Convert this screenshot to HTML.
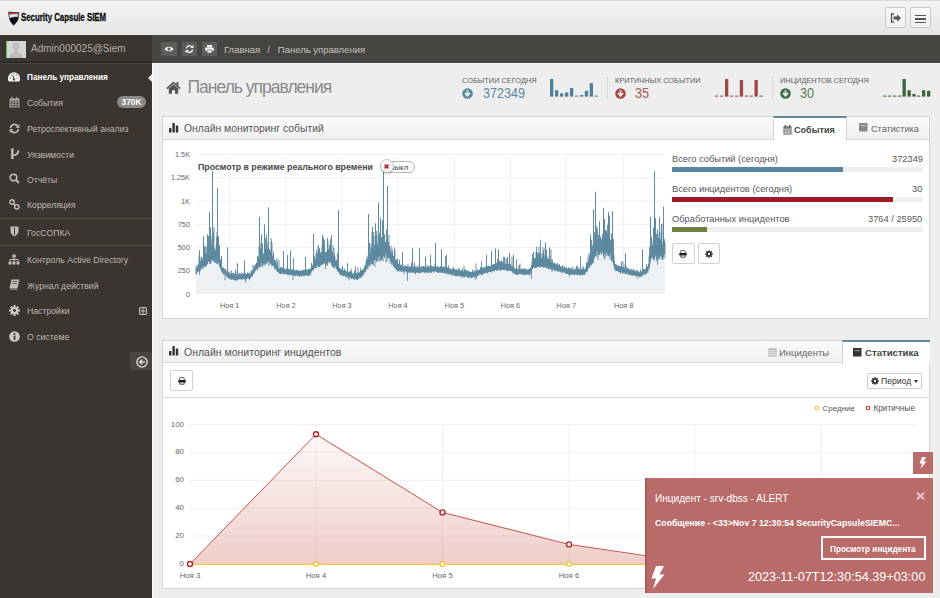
<!DOCTYPE html>
<html><head><meta charset="utf-8">
<style>
*{box-sizing:border-box;margin:0;padding:0}
html,body{width:940px;height:598px;overflow:hidden;background:#eeeeee;font-family:"Liberation Sans",sans-serif;color:#555}
.a{position:absolute}
.nw{white-space:nowrap}
#top{left:0;top:0;width:940px;height:35px;background:linear-gradient(#f4f4f4,#e6e6e6);border-top:1px solid #d9dcdc;border-bottom:1px solid #eeeeee}
.tbtn{top:6px;width:21px;height:21px;border:1px solid #c9c9c9;border-radius:2px;background:linear-gradient(#f9f9f9,#f0f0f0)}
#side{left:0;top:35px;width:152px;height:563px;background:#3a3531}
#crumb{left:152px;top:35px;width:788px;height:28px;background:#474542}
#content{left:152px;top:63px;width:788px;height:535px;background:#eeeeee;border-left:2px solid #f7f7f7;border-top:1px solid #f7f7f7}
.mi{left:27px;font-size:8.7px;color:#bdb7b0;line-height:10px}
.ic{left:8px}
.sep{left:0;width:152px;height:1px;background:#524c47}
.cbtn{top:42px;height:14px;background:#5e5b58;border-radius:1px}
.panel{background:#fff;border:1px solid #d5d5d5}
.ph{background:linear-gradient(#fbfbfb,#efefef);border-bottom:1px solid #d8d8d8}
.lbl{font-size:7.4px;color:#606060;letter-spacing:0}
.bar{position:absolute;width:3px}
.grid{stroke:#f1f1f1;stroke-width:1}
.axl{font-size:7.3px;fill:#666;font-family:"Liberation Sans",sans-serif}
</style></head><body>
<!-- top header -->
<div id="top" class="a">
  <svg class="a" style="left:8px;top:9.5px" width="12" height="15" viewBox="0 0 12 15">
    <path d="M0.4,0.8 L11.2,1.2 C11.2,6.5 10.2,10.5 5.6,14.6 C1.4,10.5 0.4,6.5 0.4,0.8 Z" fill="#0b0b0b"/>
    <path d="M0.9,1.3 L10.7,1.6 L10.6,2.6 C7,2.2 4,2.6 0.95,3.6 Z" fill="#d9282f"/>
    <path d="M0.95,3.6 C4,2.6 7,2.2 10.6,2.6 L10.3,6.2 C7.5,5.4 4,6.5 1.5,7.2 Z" fill="#a9bccd"/>
    <path d="M1.8,4.6 C4.5,3.4 7.5,3.4 9.8,4.2 C7,4.8 4.5,5.6 2.2,6.2 Z" fill="#f2f4f7"/>
  </svg>
  <div class="a nw" style="left:21.3px;top:8.6px;font-size:10.7px;font-weight:700;color:#0a0a0a;transform:scaleX(0.735);transform-origin:0 0;letter-spacing:0;-webkit-text-stroke:0.3px #0a0a0a;line-height:14px">Security Capsule SIEM</div>
  <div class="a tbtn" style="left:885px">
    <svg class="a" style="left:4px;top:5px" width="12" height="10" viewBox="0 0 12 10"><path d="M4,1 L1.5,1 L1.5,9 L4,9" fill="none" stroke="#555" stroke-width="1.3"/><path d="M3.5,3.6 L7,3.6 L7,1.2 L11,5 L7,8.8 L7,6.4 L3.5,6.4 Z" fill="#555"/></svg>
  </div>
  <div class="a tbtn" style="left:910px">
    <div class="a" style="left:4px;top:6.5px;width:11px;height:1.7px;background:#555"></div>
    <div class="a" style="left:4px;top:10px;width:11px;height:1.7px;background:#555"></div>
    <div class="a" style="left:4px;top:13.5px;width:11px;height:1.7px;background:#555"></div>
  </div>
</div>

<!-- sidebar -->
<div id="side" class="a">
  <div class="a" style="left:6.3px;top:5.7px;width:19.5px;height:17px;background:#d6d6d6;border-left:1.7px solid #4cc23a;overflow:hidden">
    <svg class="a" style="left:0;top:0" width="18" height="17" viewBox="0 0 18 17"><path d="M9,1.5 C11.3,1.5 12.6,3.3 12.4,5.8 C12.2,8 11.2,9.6 10.6,10.3 C10.5,11 11,11.6 12.5,12.2 C14.5,13 15.5,14 15.8,17 H2.2 C2.5,14 3.5,13 5.5,12.2 C7,11.6 7.5,11 7.4,10.3 C6.8,9.6 5.8,8 5.6,5.8 C5.4,3.3 6.7,1.5 9,1.5 Z" fill="#bdbdbd"/></svg>
  </div>
  <div class="a nw" style="left:31px;top:8px;font-size:10px;color:#b3ada6;line-height:12px">Admin000025@Siem</div>
  <div class="a" style="left:0;top:26px;width:152px;height:2px;background:#2e2a27"></div>
</div>
<div class="a sep" style="top:61px;background:#2d2926;height:1.5px"></div><div class="a sep" style="top:62.5px;background:#46413d;height:1px"></div>

<!-- menu items -->
<div class="a mi nw" style="top:73px;color:#fff;font-weight:700;font-size:8.2px">Панель управления</div>
<div class="a mi nw" style="top:98px">События</div>
<div class="a nw" style="left:117px;top:96px;width:29px;height:12px;border-radius:6px;background:#8c8985;color:#fff;font-size:8.3px;font-weight:700;text-align:center;line-height:12px">370K</div>
<div class="a mi nw" style="top:124px">Ретроспективный анализ</div>
<div class="a mi nw" style="top:150px">Уязвимости</div>
<div class="a mi nw" style="top:175px">Отчёты</div>
<div class="a mi nw" style="top:200px">Корреляция</div>
<div class="a sep" style="top:218px"></div>
<div class="a mi nw" style="top:228px">ГосСОПКА</div>
<div class="a sep" style="top:245px"></div>
<div class="a mi nw" style="top:255px">Контроль Active Directory</div>
<div class="a mi nw" style="top:281px">Журнал действий</div>
<div class="a mi nw" style="top:306px">Настройки</div>
<div class="a mi nw" style="top:332px">О системе</div>
<!-- active arrow -->
<div class="a" style="left:148px;top:73.5px;width:0;height:0;border-top:4px solid transparent;border-bottom:4px solid transparent;border-right:4px solid #e4ecf3"></div>
<!-- collapse btn -->
<div class="a" style="left:130px;top:352px;width:22px;height:18px;background:#4a4541;border-radius:3px 0 0 3px">
  <svg class="a" style="left:6px;top:3.5px" width="12" height="12" viewBox="0 0 12 12"><circle cx="6" cy="6" r="5.1" fill="none" stroke="#dcd8d4" stroke-width="1.4"/><path d="M9,6 L4,6 M6.2,3.6 L3.7,6 L6.2,8.4" fill="none" stroke="#dcd8d4" stroke-width="1.5"/></svg>
</div>

<!-- sidebar icons -->
<svg class="a" style="left:8px;top:72px" width="12" height="10" viewBox="0 0 12 10"><path d="M0.8,9.6 C0,8.5 0,7.5 0,6.2 A6,6 0 0 1 12,6.2 C12,7.5 12,8.5 11.2,9.6 Z" fill="#f4f4f4"/><circle cx="6" cy="7.6" r="1.1" fill="#3a3531"/><path d="M6,7.6 L5,3.4" stroke="#3a3531" stroke-width="0.9"/><circle cx="2.5" cy="6" r="0.6" fill="#3a3531"/><circle cx="9.5" cy="6" r="0.6" fill="#3a3531"/><circle cx="3.6" cy="3" r="0.6" fill="#3a3531"/><circle cx="8.4" cy="3" r="0.6" fill="#3a3531"/><circle cx="6" cy="2" r="0.6" fill="#3a3531"/></svg>
<svg class="a" style="left:9px;top:97px" width="11" height="11" viewBox="0 0 11 11"><rect x="0.5" y="1.5" width="10" height="9" fill="#b0aaa4"/><path d="M0.5,4 H10.5 M0.5,6.3 H10.5 M0.5,8.5 H10.5 M3,4 V10.5 M5.5,4 V10.5 M8,4 V10.5" stroke="#3a3531" stroke-width="0.6"/><rect x="2.5" y="0" width="1.3" height="2.5" fill="#b0aaa4"/><rect x="7.2" y="0" width="1.3" height="2.5" fill="#b0aaa4"/></svg>
<svg class="a" style="left:9px;top:123px" width="11" height="11" viewBox="0 0 11 11"><path d="M1.5,5 A4,4 0 0 1 9,3.5 M9.5,6 A4,4 0 0 1 2,7.5" fill="none" stroke="#c2bdb7" stroke-width="1.6"/><path d="M10.5,1 L10.5,5 L6.5,5 Z M0.5,10 L0.5,6 L4.5,6 Z" fill="#b0aaa4"/></svg>
<svg class="a" style="left:10px;top:148px" width="10" height="12" viewBox="0 0 10 12"><path d="M2.3,1 V10.6" stroke="#c2bdb7" stroke-width="2.4"/><path d="M0.8,1 H3.8 M0.8,10.6 H3.8" stroke="#c2bdb7" stroke-width="1"/><path d="M3.4,7.2 C6.5,7.2 8.2,5.5 8.4,2.4" fill="none" stroke="#c2bdb7" stroke-width="1.9"/></svg>
<svg class="a" style="left:9px;top:173px" width="11" height="11" viewBox="0 0 11 11"><circle cx="4.5" cy="4.5" r="3.3" fill="none" stroke="#c2bdb7" stroke-width="1.6"/><path d="M7,7 L10,10" stroke="#c2bdb7" stroke-width="2"/></svg>
<svg class="a" style="left:9px;top:199px" width="11" height="11" viewBox="0 0 11 11"><circle cx="3" cy="3" r="2.2" fill="none" stroke="#c2bdb7" stroke-width="1.4"/><circle cx="7.8" cy="7.8" r="2.2" fill="none" stroke="#c2bdb7" stroke-width="1.4"/><path d="M4.5,4.5 L6.3,6.3" stroke="#c2bdb7" stroke-width="1.3"/></svg>
<svg class="a" style="left:10px;top:226px" width="9" height="11" viewBox="0 0 9 11"><path d="M0.5,0.5 H8.5 V5 C8.5,8 6,9.5 4.5,10.5 C3,9.5 0.5,8 0.5,5 Z" fill="#c2bdb7"/><path d="M4.5,1.5 V9" stroke="#3a3531" stroke-width="1"/></svg>
<svg class="a" style="left:8px;top:254px" width="12" height="11" viewBox="0 0 12 11"><rect x="4.3" y="0.5" width="3.4" height="3" fill="#c2bdb7"/><rect x="0.5" y="7.5" width="3" height="3" fill="#c2bdb7"/><rect x="4.5" y="7.5" width="3" height="3" fill="#c2bdb7"/><rect x="8.5" y="7.5" width="3" height="3" fill="#c2bdb7"/><path d="M6,3.5 V7.5 M2,7.5 V5.5 H10 V7.5" fill="none" stroke="#c2bdb7" stroke-width="1"/></svg>
<svg class="a" style="left:9px;top:279px" width="11" height="11" viewBox="0 0 11 11"><path d="M2.5,0.5 H10.5 L8.5,9 H0.5 Z" fill="#c2bdb7"/><path d="M1,10 H8.5" stroke="#c2bdb7" stroke-width="1"/><path d="M3.5,2.5 H8.5 M3,4.5 H8" stroke="#3a3531" stroke-width="0.7"/></svg>
<svg class="a" style="left:9px;top:305px" width="11" height="11" viewBox="0 0 11 11"><circle cx="5.5" cy="5.5" r="3.6" fill="#d0cbc6"/><path d="M5.5,0 V11 M0,5.5 H11 M1.6,1.6 L9.4,9.4 M9.4,1.6 L1.6,9.4" stroke="#cfcac5" stroke-width="2"/><circle cx="5.5" cy="5.5" r="1.4" fill="#3a3531"/></svg>
<svg class="a" style="left:9px;top:331px" width="11" height="11" viewBox="0 0 11 11"><circle cx="5.5" cy="5.5" r="5.3" fill="#d0cbc6"/><rect x="4.7" y="4.5" width="1.7" height="4.5" fill="#3a3531"/><circle cx="5.5" cy="2.8" r="1" fill="#3a3531"/></svg>
<svg class="a" style="left:139px;top:306.5px" width="8" height="8" viewBox="0 0 8 8"><rect x="0.6" y="0.6" width="6.8" height="6.8" rx="1" fill="none" stroke="#c6c1bb" stroke-width="1.1"/><path d="M4,1.5 V6.5 M1.5,4 H6.5" stroke="#c6c1bb" stroke-width="1"/></svg>

<!-- breadcrumb -->
<div id="crumb" class="a">
  <div class="a cbtn" style="left:9px;top:7px;width:16px"><svg class="a" style="left:3px;top:3px" width="10" height="8" viewBox="0 0 10 8"><path d="M0.5,4 C2,1 8,1 9.5,4 C8,7 2,7 0.5,4 Z" fill="#eee"/><circle cx="5" cy="4" r="1.5" fill="#5e5b58"/></svg></div>
  <div class="a cbtn" style="left:30px;top:7px;width:15px"><svg class="a" style="left:3px;top:2px" width="9" height="10" viewBox="0 0 9 10"><path d="M1.5,4.5 A3,3 0 0 1 7,3 M7.5,5.5 A3,3 0 0 1 2,7" fill="none" stroke="#eee" stroke-width="1.4"/><path d="M8.5,0.8 V4 H5.3 Z M0.5,9.2 V6 H3.7 Z" fill="#eee"/></svg></div>
  <div class="a cbtn" style="left:50px;top:7px;width:15px"><svg class="a" style="left:3px;top:3px" width="9" height="8" viewBox="0 0 9 8"><rect x="2" y="0" width="5" height="2.5" fill="#eee"/><rect x="0" y="2.5" width="9" height="3.5" rx="0.8" fill="#eee"/><rect x="2" y="5" width="5" height="3" fill="#eee" stroke="#5e5b58" stroke-width="0.6"/></svg></div>
  <div class="a nw" style="left:72px;top:8.5px;font-size:9.5px;color:#c5c2be;line-height:12px">Главная<span style="padding:0 8px 0 7px">/</span>Панель управления</div>
</div>

<!-- content bg -->
<div id="content" class="a"></div>

<!-- page title -->
<svg class="a" style="left:166px;top:81px" width="15" height="13" viewBox="0 0 15 13"><path d="M7.5,0.5 L0.3,7 L1.5,8.2 L7.5,2.8 L13.5,8.2 L14.7,7 Z" fill="#555"/><path d="M2.8,7.5 L7.5,3.5 L12.2,7.5 V12.8 H9 V9.3 H6 V12.8 H2.8 Z" fill="#555"/><rect x="10.5" y="1" width="2" height="3.5" fill="#555"/></svg>
<div class="a nw" style="left:187.5px;top:77.3px;font-size:17.5px;color:#8a8a8a;letter-spacing:-1px;line-height:20px">Панель управления</div>

<!-- stats -->
<div class="a nw lbl" style="left:462px;top:76px">СОБЫТИИ СЕГОДНЯ</div>
<svg class="a" style="left:462px;top:88px" width="11" height="11" viewBox="0 0 11 11"><circle cx="5.5" cy="5.5" r="5.3" fill="#5887a2"/><path d="M5.5,2.3 V7 M3,5 L5.5,7.8 L8,5" fill="none" stroke="#eee" stroke-width="1.7"/></svg>
<div class="a nw" style="left:483px;top:85.5px;font-size:14px;color:#5c8aa5;line-height:15px;transform:scaleX(0.9);transform-origin:0 0">372349</div>
<div class="a" style="left:607px;top:77px;height:22px;border-left:1px dotted #c8c8c8"></div>
<div class="a nw lbl" style="left:615px;top:76px">КРИТИЧНЫХ СОБЫТИИ</div>
<svg class="a" style="left:615px;top:88px" width="11" height="11" viewBox="0 0 11 11"><circle cx="5.5" cy="5.5" r="5.3" fill="#a84a48"/><path d="M5.5,2.3 V7 M3,5 L5.5,7.8 L8,5" fill="none" stroke="#eee" stroke-width="1.7"/></svg>
<div class="a nw" style="left:635px;top:85.5px;font-size:14px;color:#ac5553;line-height:15px;transform:scaleX(0.9);transform-origin:0 0">35</div>
<div class="a" style="left:772px;top:77px;height:22px;border-left:1px dotted #c8c8c8"></div>
<div class="a nw lbl" style="left:780px;top:76px">ИНЦИДЕНТОВ СЕГОДНЯ</div>
<svg class="a" style="left:780px;top:88px" width="11" height="11" viewBox="0 0 11 11"><circle cx="5.5" cy="5.5" r="5.3" fill="#3f6b42"/><path d="M5.5,2.3 V7 M3,5 L5.5,7.8 L8,5" fill="none" stroke="#eee" stroke-width="1.7"/></svg>
<div class="a nw" style="left:800px;top:85.5px;font-size:14px;color:#557a57;line-height:15px;transform:scaleX(0.9);transform-origin:0 0">30</div>

<!-- sparklines -->
<svg class="a" style="left:545px;top:75px" width="400" height="25">
 <g fill="#4f7f99">
  <rect x="5" y="4" width="3.3" height="17.6"/><rect x="10" y="15.2" width="3.3" height="6.4"/><rect x="15" y="18.4" width="3.3" height="3.2"/><rect x="20" y="17.4" width="3.3" height="4.2"/><rect x="25" y="13" width="3.3" height="8.6"/><rect x="30" y="20.6" width="3.3" height="1"/><rect x="35" y="20" width="3.3" height="1.6"/><rect x="39.8" y="15.8" width="3.3" height="5.8"/><rect x="44.7" y="8.2" width="3.3" height="13.4"/><rect x="49.6" y="20.6" width="3.3" height="1"/>
 </g>
 <g fill="#9b4848">
  <rect x="170" y="20.6" width="3.3" height="1"/><rect x="175" y="20.6" width="3.3" height="1"/><rect x="180" y="4.1" width="3.3" height="17.5"/><rect x="185" y="20.6" width="3.3" height="1"/><rect x="190" y="20.6" width="3.3" height="1"/><rect x="194.8" y="5" width="3.3" height="16.6"/><rect x="199.8" y="20.6" width="3.3" height="1"/><rect x="204.6" y="20.6" width="3.3" height="1"/><rect x="209.5" y="5" width="3.3" height="16.6"/><rect x="214.5" y="20.6" width="3.3" height="1"/>
 </g>
 <g fill="#3b643a">
  <rect x="338.2" y="20.6" width="3.3" height="1"/><rect x="343" y="20.6" width="3.3" height="1"/><rect x="348" y="20.6" width="3.3" height="1"/><rect x="353" y="20.6" width="3.3" height="1"/><rect x="357.5" y="4" width="3.3" height="17.6"/><rect x="362.5" y="15.2" width="3.3" height="6.4"/><rect x="367.4" y="19" width="3.3" height="2.6"/><rect x="372" y="20.6" width="3.3" height="1"/><rect x="377" y="15.2" width="3.3" height="6.4"/><rect x="382" y="15.8" width="3.3" height="5.8"/>
 </g>
</svg>

<!-- events panel -->
<div class="a panel" style="left:162px;top:116px;width:768px;height:203px"></div>
<div class="a ph" style="left:163px;top:117px;width:766px;height:23px"></div>
<svg class="a" style="left:169px;top:122.5px" width="10" height="10" viewBox="0 0 10 10"><rect x="0" y="5" width="2.4" height="4.5" rx="0.5" fill="#333"/><rect x="3.4" y="0" width="2.4" height="9.5" rx="0.5" fill="#333"/><rect x="6.8" y="2.5" width="2.4" height="7" rx="0.5" fill="#333"/></svg>
<div class="a nw" style="left:184px;top:122.7px;font-size:10.4px;color:#585858;line-height:12px">Онлайн мониторинг событий</div>
<!-- tabs -->
<div class="a" style="left:773px;top:116px;width:74px;height:25px;background:#fff;border-top:2px solid #60879e;border-left:1px solid #d5d5d5;border-right:1px solid #d5d5d5"></div>
<svg class="a" style="left:783px;top:124.5px" width="9" height="10" viewBox="0 0 9 10"><rect x="0.3" y="1.3" width="8.4" height="8.4" rx="0.8" fill="#7a7a7a"/><path d="M0.3,4 H8.7 M0.3,6 H8.7 M0.3,8 H8.7 M3.1,4 V9.7 M5.9,4 V9.7" stroke="#f4f4f4" stroke-width="0.55"/><rect x="1.6" y="0" width="1.3" height="2.2" fill="#555"/><rect x="6.1" y="0" width="1.3" height="2.2" fill="#555"/></svg>
<div class="a nw" style="left:794px;top:124.8px;font-size:9.1px;font-weight:700;color:#444;line-height:11px">События</div>
<svg class="a" style="left:859px;top:123px" width="9" height="9" viewBox="0 0 9 9"><rect x="0" y="0" width="8.5" height="8.5" fill="#888"/><rect x="1.5" y="2" width="5.5" height="1.2" fill="#bbb"/></svg>
<div class="a nw" style="left:871px;top:123.5px;font-size:9.1px;color:#666;line-height:11px">Статистика</div>

<!-- events chart -->
<svg class="a" style="left:0;top:0" width="940" height="598" viewBox="0 0 940 598">
  <g class="grid">
    <path d="M196,154.5 H665 M196,177.8 H665 M196,201.1 H665 M196,224.4 H665 M196,247.6 H665 M196,270.9 H665"/>
    <path d="M229.7,154 V294 M286,154 V294 M342,154 V294 M398,154 V294 M454.4,154 V294 M510.4,154 V294 M566.3,154 V294 M623.6,154 V294"/>
  </g>
  <path d="M196.0,273.6 L197.0,271.6 L198.0,271.1 L199.0,269.7 L200.0,269.9 L201.0,268.5 L202.0,266.4 L203.0,268.2 L204.0,264.2 L205.0,266.1 L206.0,265.4 L207.0,263.7 L208.0,259.9 L209.0,260.1 L210.0,260.5 L211.0,261.7 L212.0,258.3 L213.0,258.4 L214.0,261.3 L215.0,260.7 L216.0,258.5 L217.0,257.7 L218.0,261.9 L219.0,263.3 L220.0,265.8 L221.0,269.1 L222.0,271.2 L223.0,273.2 L224.0,273.7 L225.0,279.3 L226.0,275.3 L227.0,275.8 L228.0,277.4 L229.0,277.8 L230.0,278.4 L231.0,277.5 L232.0,278.8 L233.0,277.7 L234.0,278.7 L235.0,279.5 L236.0,279.7 L237.0,279.5 L238.0,278.1 L239.0,278.7 L240.0,278.0 L241.0,278.6 L242.0,278.3 L243.0,278.3 L244.0,277.3 L245.0,279.5 L246.0,278.8 L247.0,277.6 L248.0,277.5 L249.0,278.1 L250.0,277.8 L251.0,277.0 L252.0,275.5 L253.0,272.8 L254.0,272.7 L255.0,270.3 L256.0,269.9 L257.0,268.0 L258.0,268.6 L259.0,266.7 L260.0,266.4 L261.0,265.2 L262.0,262.1 L263.0,263.6 L264.0,264.7 L265.0,264.2 L266.0,260.9 L267.0,263.4 L268.0,261.7 L269.0,265.2 L270.0,261.4 L271.0,263.6 L272.0,265.4 L273.0,265.4 L274.0,265.2 L275.0,268.0 L276.0,269.0 L277.0,270.4 L278.0,270.8 L279.0,272.6 L280.0,272.5 L281.0,272.6 L282.0,272.5 L283.0,272.0 L284.0,273.8 L285.0,273.1 L286.0,273.0 L287.0,273.6 L288.0,273.8 L289.0,274.2 L290.0,273.5 L291.0,273.1 L292.0,274.6 L293.0,279.1 L294.0,274.0 L295.0,274.8 L296.0,273.9 L297.0,274.7 L298.0,274.1 L299.0,275.9 L300.0,274.9 L301.0,275.4 L302.0,274.1 L303.0,274.2 L304.0,275.7 L305.0,274.0 L306.0,274.8 L307.0,274.8 L308.0,275.2 L309.0,275.0 L310.0,275.0 L311.0,272.6 L312.0,270.3 L313.0,269.3 L314.0,268.9 L315.0,267.4 L316.0,265.2 L317.0,265.7 L318.0,265.5 L319.0,263.8 L320.0,266.0 L321.0,264.3 L322.0,263.1 L323.0,262.0 L324.0,260.8 L325.0,262.6 L326.0,262.6 L327.0,265.0 L328.0,261.5 L329.0,262.4 L330.0,261.1 L331.0,262.3 L332.0,262.4 L333.0,265.6 L334.0,267.4 L335.0,266.2 L336.0,268.0 L337.0,268.1 L338.0,270.5 L339.0,271.8 L340.0,274.2 L341.0,273.1 L342.0,274.8 L343.0,274.9 L344.0,275.0 L345.0,275.7 L346.0,275.1 L347.0,277.4 L348.0,277.1 L349.0,279.6 L350.0,277.0 L351.0,277.8 L352.0,277.8 L353.0,278.0 L354.0,278.7 L355.0,278.5 L356.0,278.7 L357.0,279.1 L358.0,277.9 L359.0,278.0 L360.0,276.0 L361.0,276.4 L362.0,275.6 L363.0,274.0 L364.0,273.7 L365.0,270.7 L366.0,268.9 L367.0,268.1 L368.0,268.1 L369.0,264.8 L370.0,265.9 L371.0,263.3 L372.0,259.6 L373.0,263.2 L374.0,259.2 L375.0,265.9 L376.0,255.8 L377.0,258.9 L378.0,259.6 L379.0,260.9 L380.0,254.0 L381.0,259.0 L382.0,256.9 L383.0,260.6 L384.0,255.2 L385.0,257.0 L386.0,261.2 L387.0,260.8 L388.0,257.3 L389.0,256.7 L390.0,262.5 L391.0,260.0 L392.0,264.6 L393.0,262.4 L394.0,265.5 L395.0,266.6 L396.0,268.8 L397.0,269.2 L398.0,270.0 L399.0,270.2 L400.0,270.9 L401.0,269.7 L402.0,270.3 L403.0,271.2 L404.0,273.5 L405.0,270.6 L406.0,270.8 L407.0,271.8 L408.0,272.0 L409.0,272.0 L410.0,272.2 L411.0,271.9 L412.0,271.8 L413.0,270.7 L414.0,271.0 L415.0,272.3 L416.0,271.9 L417.0,271.3 L418.0,271.9 L419.0,271.8 L420.0,271.8 L421.0,270.8 L422.0,270.8 L423.0,271.3 L424.0,271.5 L425.0,272.5 L426.0,270.4 L427.0,271.7 L428.0,272.1 L429.0,270.3 L430.0,272.1 L431.0,272.1 L432.0,270.3 L433.0,270.4 L434.0,271.9 L435.0,270.4 L436.0,270.3 L437.0,271.9 L438.0,271.5 L439.0,270.4 L440.0,271.4 L441.0,270.6 L442.0,272.1 L443.0,270.8 L444.0,271.7 L445.0,271.7 L446.0,273.2 L447.0,273.3 L448.0,272.7 L449.0,272.9 L450.0,273.5 L451.0,273.1 L452.0,275.2 L453.0,274.2 L454.0,274.8 L455.0,274.2 L456.0,275.5 L457.0,273.9 L458.0,274.3 L459.0,274.6 L460.0,275.2 L461.0,276.4 L462.0,276.0 L463.0,276.9 L464.0,274.7 L465.0,276.1 L466.0,275.4 L467.0,276.0 L468.0,277.0 L469.0,277.0 L470.0,276.3 L471.0,277.4 L472.0,277.1 L473.0,276.8 L474.0,275.1 L475.0,278.4 L476.0,274.9 L477.0,275.2 L478.0,275.0 L479.0,274.4 L480.0,273.3 L481.0,274.3 L482.0,273.7 L483.0,272.5 L484.0,272.2 L485.0,271.1 L486.0,271.9 L487.0,271.8 L488.0,271.5 L489.0,270.4 L490.0,271.2 L491.0,271.3 L492.0,271.6 L493.0,270.2 L494.0,270.8 L495.0,269.1 L496.0,269.3 L497.0,269.8 L498.0,268.3 L499.0,269.4 L500.0,270.1 L501.0,269.0 L502.0,268.9 L503.0,268.2 L504.0,269.2 L505.0,269.0 L506.0,269.3 L507.0,268.7 L508.0,270.2 L509.0,269.7 L510.0,270.1 L511.0,270.1 L512.0,270.5 L513.0,272.2 L514.0,271.8 L515.0,272.6 L516.0,273.7 L517.0,274.1 L518.0,274.1 L519.0,272.9 L520.0,273.2 L521.0,272.6 L522.0,273.4 L523.0,274.1 L524.0,273.1 L525.0,272.7 L526.0,272.9 L527.0,272.9 L528.0,273.8 L529.0,274.6 L530.0,273.8 L531.0,271.1 L532.0,268.3 L533.0,267.3 L534.0,266.5 L535.0,265.0 L536.0,267.3 L537.0,265.4 L538.0,266.2 L539.0,265.8 L540.0,266.3 L541.0,265.9 L542.0,266.2 L543.0,266.3 L544.0,264.4 L545.0,266.1 L546.0,266.3 L547.0,265.7 L548.0,267.2 L549.0,268.5 L550.0,268.4 L551.0,267.7 L552.0,271.0 L553.0,268.9 L554.0,269.8 L555.0,269.8 L556.0,270.1 L557.0,269.7 L558.0,270.2 L559.0,271.1 L560.0,271.0 L561.0,271.4 L562.0,271.8 L563.0,272.0 L564.0,270.8 L565.0,271.8 L566.0,271.3 L567.0,272.3 L568.0,272.9 L569.0,273.7 L570.0,272.7 L571.0,274.2 L572.0,273.0 L573.0,273.6 L574.0,274.3 L575.0,273.8 L576.0,274.2 L577.0,272.9 L578.0,273.7 L579.0,273.2 L580.0,274.1 L581.0,274.3 L582.0,272.9 L583.0,274.4 L584.0,273.5 L585.0,273.5 L586.0,271.2 L587.0,269.4 L588.0,267.8 L589.0,267.5 L590.0,266.0 L591.0,263.0 L592.0,261.6 L593.0,262.9 L594.0,256.9 L595.0,254.8 L596.0,255.0 L597.0,256.2 L598.0,259.0 L599.0,252.9 L600.0,253.4 L601.0,250.9 L602.0,252.1 L603.0,252.4 L604.0,257.5 L605.0,258.7 L606.0,255.5 L607.0,254.4 L608.0,255.1 L609.0,255.5 L610.0,258.5 L611.0,258.4 L612.0,260.0 L613.0,261.4 L614.0,265.8 L615.0,269.8 L616.0,269.8 L617.0,269.9 L618.0,269.7 L619.0,270.5 L620.0,271.0 L621.0,272.0 L622.0,271.0 L623.0,272.7 L624.0,271.5 L625.0,273.2 L626.0,271.8 L627.0,273.2 L628.0,273.2 L629.0,274.3 L630.0,273.8 L631.0,274.2 L632.0,274.7 L633.0,274.3 L634.0,274.8 L635.0,274.8 L636.0,275.0 L637.0,277.5 L638.0,275.4 L639.0,276.1 L640.0,275.9 L641.0,276.4 L642.0,274.1 L643.0,274.9 L644.0,273.0 L645.0,273.7 L646.0,273.4 L647.0,271.4 L648.0,271.8 L649.0,266.7 L650.0,262.6 L651.0,258.9 L652.0,256.6 L653.0,255.8 L654.0,258.0 L655.0,256.4 L656.0,254.7 L657.0,253.5 L658.0,254.9 L659.0,257.8 L660.0,258.3 L661.0,253.0 L662.0,258.7 L663.0,259.1 L664.0,252.3 L665.0,257.2 L665.0,294.0 L196.0,294.0 Z" fill="#edf1f4" stroke="none"/>
  <path d="M196.0 274.5V266.1M196.5 274.0V268.4M197.0 272.6V264.4M197.5 271.6V267.8M198.0 272.0V265.6M198.5 271.1V263.7M199.0 270.7V255.2M199.5 274.7V255.2M200.0 270.9V263.9M200.5 270.4V260.9M201.0 269.4V257.8M201.5 267.4V256.7M202.0 267.3V257.4M202.5 268.7V260.4M203.0 269.2V258.5M203.5 265.9V254.9M204.0 265.2V256.5M204.5 267.2V246.2M205.0 267.0V246.0M205.5 266.6V253.0M206.0 266.4V247.6M206.5 265.3V254.3M207.0 264.6V245.5M207.5 264.2V247.8M208.0 260.8V250.6M208.5 261.8V253.0M209.0 261.0V249.4M209.5 263.7V249.1M210.0 261.5V252.3M210.5 264.1V227.3M211.0 262.7V235.3M211.5 260.4V245.3M212.0 259.3V239.2M212.5 260.8V233.7M213.0 259.3V247.2M213.5 260.3V232.7M214.0 262.3V227.1M214.5 262.4V248.5M215.0 261.6V250.0M215.5 262.8V250.5M216.0 259.4V246.8M216.5 263.7V237.1M217.0 258.6V232.2M217.5 264.3V231.9M218.0 262.8V250.0M218.5 262.2V246.9M219.0 264.3V244.4M219.5 266.7V257.8M220.0 266.8V259.0M220.5 268.3V259.7M221.0 270.1V263.3M221.5 271.3V262.9M222.0 272.2V267.8M222.5 272.8V267.8M223.0 274.2V267.8M223.5 273.3V267.3M224.0 274.7V268.5M224.5 273.8V269.5M225.0 280.3V268.4M225.5 275.2V269.3M226.0 276.2V271.6M226.5 276.1V271.2M227.0 276.7V272.3M227.5 277.2V272.7M228.0 278.4V273.1M228.5 278.2V272.1M229.0 278.7V271.3M229.5 278.0V272.9M230.0 279.4V273.3M230.5 279.1V274.0M231.0 278.4V273.5M231.5 279.8V270.4M232.0 279.8V274.2M232.5 278.7V272.7M233.0 278.7V275.0M233.5 280.0V273.2M234.0 279.6V274.4M234.5 280.1V273.6M235.0 280.4V272.8M235.5 280.3V269.5M236.0 280.6V271.6M236.5 279.2V274.6M237.0 280.4V275.1M237.5 280.3V271.9M238.0 279.1V273.4M238.5 279.6V274.5M239.0 279.6V274.8M239.5 278.6V273.0M240.0 278.9V273.6M240.5 278.6V273.2M241.0 279.5V274.8M241.5 279.7V273.8M242.0 279.2V274.8M242.5 279.1V272.8M243.0 279.3V272.9M243.5 278.3V273.7M244.0 278.3V274.7M244.5 279.3V272.5M245.0 280.4V272.9M245.5 282.5V273.7M246.0 279.8V274.2M246.5 278.6V273.9M247.0 278.5V274.0M247.5 278.0V272.3M248.0 278.4V272.9M248.5 278.4V273.0M249.0 279.0V272.7M249.5 280.3V274.1M250.0 278.7V273.0M250.5 277.4V273.4M251.0 278.0V271.0M251.5 276.5V271.5M252.0 276.4V269.8M252.5 276.0V270.6M253.0 273.8V264.8M253.5 274.2V269.3M254.0 273.6V265.0M254.5 272.2V266.3M255.0 271.2V267.3M255.5 270.4V264.6M256.0 270.8V264.0M256.5 269.0V262.5M257.0 268.9V262.6M257.5 269.4V257.7M258.0 269.5V259.2M258.5 266.6V256.9M259.0 267.6V246.0M259.5 265.5V248.1M260.0 267.3V251.2M260.5 266.8V255.8M261.0 266.2V242.6M261.5 263.0V240.0M262.0 263.0V243.0M262.5 267.1V243.5M263.0 264.5V255.2M263.5 264.4V253.2M264.0 265.7V255.2M264.5 263.4V254.6M265.0 265.1V249.6M265.5 264.2V238.1M266.0 261.9V248.8M266.5 263.0V234.6M267.0 264.3V241.1M267.5 261.4V249.3M268.0 262.7V244.5M268.5 260.7V248.5M269.0 266.1V250.2M269.5 262.4V249.0M270.0 262.3V250.0M270.5 263.9V252.8M271.0 264.5V237.9M271.5 264.5V240.7M272.0 266.3V243.0M272.5 265.2V256.1M273.0 266.3V255.3M273.5 265.3V251.8M274.0 266.1V259.3M274.5 269.0V260.1M275.0 268.9V259.8M275.5 268.1V261.9M276.0 269.9V259.8M276.5 269.9V264.3M277.0 271.3V257.7M277.5 271.8V261.9M278.0 271.8V266.6M278.5 272.8V268.2M279.0 273.5V259.7M279.5 273.4V269.0M280.0 273.4V268.4M280.5 274.0V267.0M281.0 273.6V267.4M281.5 273.8V268.5M282.0 273.5V267.6M282.5 273.4V267.7M283.0 272.9V269.1M283.5 273.4V268.3M284.0 274.7V268.7M284.5 274.1V268.5M285.0 274.0V269.2M285.5 273.3V269.8M286.0 274.0V269.9M286.5 274.3V268.5M287.0 274.6V268.6M287.5 274.6V268.6M288.0 274.7V269.7M288.5 274.5V269.0M289.0 275.1V268.6M289.5 275.5V270.2M290.0 274.4V269.0M290.5 274.8V269.3M291.0 274.0V270.0M291.5 275.1V269.5M292.0 275.5V270.2M292.5 275.1V269.0M293.0 280.1V269.9M293.5 275.8V257.7M294.0 274.9V269.8M294.5 275.9V270.8M295.0 275.8V270.3M295.5 275.8V270.5M296.0 274.8V270.6M296.5 274.8V270.0M297.0 275.6V270.3M297.5 276.5V270.8M298.0 275.1V269.5M298.5 275.4V271.0M299.0 276.8V271.5M299.5 276.0V271.3M300.0 275.8V270.1M300.5 276.0V271.0M301.0 276.4V270.8M301.5 276.5V270.8M302.0 275.1V270.9M302.5 275.4V270.3M303.0 275.2V270.2M303.5 276.1V270.1M304.0 276.6V269.3M304.5 275.9V270.3M305.0 274.9V270.6M305.5 275.4V270.9M306.0 275.7V269.1M306.5 275.2V269.9M307.0 275.7V269.7M307.5 275.7V270.4M308.0 276.1V269.2M308.5 275.0V268.8M309.0 275.9V268.9M309.5 275.0V268.9M310.0 276.0V268.9M310.5 273.4V269.4M311.0 273.5V267.8M311.5 271.7V268.1M312.0 271.2V265.6M312.5 270.4V265.6M313.0 270.2V264.3M313.5 269.2V258.0M314.0 269.8V255.2M314.5 267.5V256.6M315.0 268.3V259.3M315.5 267.8V258.9M316.0 266.1V253.3M316.5 268.0V250.1M317.0 266.6V256.0M317.5 264.7V253.1M318.0 266.5V246.4M318.5 267.3V245.0M319.0 264.8V248.9M319.5 266.9V254.8M320.0 266.9V254.8M320.5 265.1V252.4M321.0 265.2V254.0M321.5 264.8V251.7M322.0 264.0V245.4M322.5 264.8V234.6M323.0 262.9V236.6M323.5 264.1V238.1M324.0 261.8V244.3M324.5 262.8V239.7M325.0 263.5V253.3M325.5 268.8V252.2M326.0 263.5V253.8M326.5 264.5V251.6M327.0 265.9V250.9M327.5 264.8V237.9M328.0 262.4V240.7M328.5 261.4V249.2M329.0 263.4V250.2M329.5 261.7V244.8M330.0 262.1V250.8M330.5 261.7V238.8M331.0 263.2V255.1M331.5 265.3V235.1M332.0 263.4V252.3M332.5 266.9V253.3M333.0 266.6V244.9M333.5 267.8V256.0M334.0 268.3V248.1M334.5 266.9V253.2M335.0 267.1V256.5M335.5 266.0V260.8M336.0 269.0V259.7M336.5 269.4V260.7M337.0 269.0V259.5M337.5 271.1V253.2M338.0 271.5V262.8M338.5 272.1V265.1M339.0 272.7V267.7M339.5 273.7V267.9M340.0 275.1V267.8M340.5 274.3V268.7M341.0 274.1V270.3M341.5 275.4V269.1M342.0 275.8V269.4M342.5 275.2V266.2M343.0 275.8V269.6M343.5 276.3V270.9M344.0 275.9V269.7M344.5 275.8V268.6M345.0 276.6V271.0M345.5 276.9V270.2M346.0 276.1V270.8M346.5 276.0V271.7M347.0 278.3V272.0M347.5 277.1V272.5M348.0 278.1V272.1M348.5 276.6V272.3M349.0 280.5V271.7M349.5 277.1V271.5M350.0 277.9V271.7M350.5 277.7V271.8M351.0 278.7V268.5M351.5 279.0V270.7M352.0 278.7V272.7M352.5 278.1V273.9M353.0 279.0V273.5M353.5 279.2V273.7M354.0 279.6V272.5M354.5 278.4V270.5M355.0 279.4V272.8M355.5 279.1V266.3M356.0 279.6V272.9M356.5 279.2V273.0M357.0 280.1V274.9M357.5 279.7V271.9M358.0 278.8V267.2M358.5 279.1V273.0M359.0 279.0V273.7M359.5 277.3V272.2M360.0 276.9V271.7M360.5 277.9V267.8M361.0 277.4V270.4M361.5 277.1V270.8M362.0 276.6V269.6M362.5 276.1V269.9M363.0 275.0V270.5M363.5 274.5V268.7M364.0 274.6V268.5M364.5 272.4V265.7M365.0 271.6V267.7M365.5 271.9V264.9M366.0 269.8V261.0M366.5 269.6V259.9M367.0 269.0V255.5M367.5 267.2V258.5M368.0 269.0V257.4M368.5 265.6V249.5M369.0 265.7V247.6M369.5 265.5V252.8M370.0 266.9V247.3M370.5 262.3V253.5M371.0 264.2V243.8M371.5 264.3V246.9M372.0 260.5V231.9M372.5 264.7V248.4M373.0 264.1V248.5M373.5 264.7V232.1M374.0 260.1V236.4M374.5 260.0V245.3M375.0 266.9V245.1M375.5 260.6V247.0M376.0 256.7V234.2M376.5 262.1V231.0M377.0 259.8V235.0M377.5 261.0V245.0M378.0 260.5V242.9M378.5 256.5V244.5M379.0 261.9V238.2M379.5 257.2V232.8M380.0 254.9V241.6M380.5 260.9V241.7M381.0 259.9V239.2M381.5 260.5V236.7M382.0 257.8V242.0M382.5 259.1V242.7M383.0 261.5V231.3M383.5 255.6V237.7M384.0 256.2V234.8M384.5 257.7V234.2M385.0 257.9V245.1M385.5 253.2V241.7M386.0 262.1V242.5M386.5 254.5V229.4M387.0 261.8V243.4M387.5 257.6V235.2M388.0 258.2V244.7M388.5 258.3V241.5M389.0 257.6V235.0M389.5 258.5V246.0M390.0 263.5V250.4M390.5 261.1V250.5M391.0 261.0V245.5M391.5 263.6V252.7M392.0 265.5V248.2M392.5 263.3V251.0M393.0 263.4V256.3M393.5 266.4V256.0M394.0 266.4V254.7M394.5 267.9V247.3M395.0 267.5V249.9M395.5 268.0V259.6M396.0 269.7V259.7M396.5 270.2V260.0M397.0 270.1V264.6M397.5 271.6V263.5M398.0 270.9V263.8M398.5 270.9V263.8M399.0 271.2V264.7M399.5 270.2V266.2M400.0 271.8V265.1M400.5 271.0V264.4M401.0 270.6V266.4M401.5 271.8V264.9M402.0 271.2V264.6M402.5 270.7V265.9M403.0 272.1V266.5M403.5 270.9V266.3M404.0 274.5V266.7M404.5 271.7V266.3M405.0 271.5V265.0M405.5 270.8V266.4M406.0 271.8V266.0M406.5 272.3V266.3M407.0 272.8V266.4M407.5 280.9V266.8M408.0 272.9V263.6M408.5 272.1V267.7M409.0 272.9V266.6M409.5 271.6V266.8M410.0 273.1V265.7M410.5 271.5V267.2M411.0 272.9V267.4M411.5 271.9V262.2M412.0 272.7V267.6M412.5 272.7V265.8M413.0 271.6V266.6M413.5 272.6V267.4M414.0 271.9V265.5M414.5 272.9V262.6M415.0 273.2V267.7M415.5 274.5V266.3M416.0 272.8V267.6M416.5 272.3V267.6M417.0 272.2V266.4M417.5 272.4V266.0M418.0 272.8V266.0M418.5 273.2V267.8M419.0 272.7V266.9M419.5 272.8V264.5M420.0 272.8V266.4M420.5 273.1V267.6M421.0 271.8V266.5M421.5 272.5V267.6M422.0 271.7V265.9M422.5 271.5V266.6M423.0 272.3V266.3M423.5 272.1V266.0M424.0 272.4V266.8M424.5 272.5V267.2M425.0 273.4V266.1M425.5 272.2V267.5M426.0 271.3V266.5M426.5 272.3V267.9M427.0 272.7V265.2M427.5 272.2V267.1M428.0 273.1V267.2M428.5 272.9V265.7M429.0 271.3V265.8M429.5 271.8V267.5M430.0 273.0V266.6M430.5 272.2V266.7M431.0 273.0V265.9M431.5 272.9V265.6M432.0 271.2V265.7M432.5 271.7V267.0M433.0 271.3V267.2M433.5 271.8V266.5M434.0 272.8V265.9M434.5 271.2V266.4M435.0 271.3V263.1M435.5 271.5V266.2M436.0 271.2V267.3M436.5 272.0V266.6M437.0 272.8V267.0M437.5 272.0V266.3M438.0 272.4V265.8M438.5 272.9V267.1M439.0 271.3V267.7M439.5 272.7V267.2M440.0 272.3V267.4M440.5 272.8V266.1M441.0 271.5V267.3M441.5 272.6V265.2M442.0 273.0V267.3M442.5 272.8V267.2M443.0 271.7V267.7M443.5 272.9V266.7M444.0 272.6V266.5M444.5 273.4V267.0M445.0 272.6V268.2M445.5 272.7V255.9M446.0 274.1V267.4M446.5 273.4V255.0M447.0 274.2V268.8M447.5 273.0V267.3M448.0 273.6V267.7M448.5 274.4V265.2M449.0 273.9V268.3M449.5 273.8V269.2M450.0 274.5V267.9M450.5 274.5V269.4M451.0 274.0V268.7M451.5 274.8V269.6M452.0 276.1V269.6M452.5 274.1V268.4M453.0 275.1V269.2M453.5 274.4V266.7M454.0 275.7V269.1M454.5 275.6V269.3M455.0 275.2V269.3M455.5 276.1V270.1M456.0 276.4V269.1M456.5 276.0V269.4M457.0 274.8V269.7M457.5 276.5V270.6M458.0 275.2V269.7M458.5 275.9V269.9M459.0 275.5V267.8M459.5 275.7V268.5M460.0 276.1V270.7M460.5 275.9V271.5M461.0 277.4V270.3M461.5 275.8V270.3M462.0 276.9V271.7M462.5 276.4V268.5M463.0 277.9V271.2M463.5 276.5V271.6M464.0 275.6V265.6M464.5 277.3V269.7M465.0 277.0V269.1M465.5 276.5V270.4M466.0 276.4V271.6M466.5 276.4V270.3M467.0 276.9V269.6M467.5 277.6V271.1M468.0 277.9V272.0M468.5 277.0V271.1M469.0 277.9V271.6M469.5 277.0V271.6M470.0 277.2V272.1M470.5 276.8V271.9M471.0 278.3V272.7M471.5 277.4V272.1M472.0 278.1V271.6M472.5 276.5V269.6M473.0 277.7V272.8M473.5 276.1V272.0M474.0 276.1V270.0M474.5 277.3V271.3M475.0 279.4V271.4M475.5 276.8V271.1M476.0 275.8V263.3M476.5 279.1V271.3M477.0 276.2V269.6M477.5 275.6V269.4M478.0 275.9V271.0M478.5 275.2V269.9M479.0 275.3V270.1M479.5 274.0V269.7M480.0 274.2V270.0M480.5 273.7V267.1M481.0 275.2V267.9M481.5 274.5V261.0M482.0 274.6V267.6M482.5 274.7V267.5M483.0 273.4V268.5M483.5 273.6V268.2M484.0 273.2V267.2M484.5 273.5V267.9M485.0 272.1V266.7M485.5 272.9V267.0M486.0 272.8V267.6M486.5 272.6V264.1M487.0 272.7V266.0M487.5 273.7V266.6M488.0 272.4V265.9M488.5 272.1V266.4M489.0 271.3V265.8M489.5 271.8V265.7M490.0 272.1V265.7M490.5 271.7V266.4M491.0 272.2V267.0M491.5 271.3V265.9M492.0 272.5V265.1M492.5 270.3V265.0M493.0 271.1V263.8M493.5 270.5V263.9M494.0 271.7V264.5M494.5 271.0V264.1M495.0 270.1V264.0M495.5 269.8V262.9M496.0 270.2V262.6M496.5 270.4V262.8M497.0 270.8V264.2M497.5 270.4V258.9M498.0 269.2V261.6M498.5 269.1V259.0M499.0 270.4V262.1M499.5 269.7V260.9M500.0 271.0V260.6M500.5 270.5V261.5M501.0 269.9V263.5M501.5 270.1V260.3M502.0 269.9V262.6M502.5 269.5V261.7M503.0 269.2V262.1M503.5 269.9V256.7M504.0 270.1V264.1M504.5 270.1V256.9M505.0 270.0V264.0M505.5 269.6V264.5M506.0 270.2V258.1M506.5 271.0V263.7M507.0 269.6V258.3M507.5 271.0V256.9M508.0 271.1V264.1M508.5 270.1V264.2M509.0 270.6V262.8M509.5 270.3V263.7M510.0 271.0V265.4M510.5 270.8V263.9M511.0 271.0V265.6M511.5 271.4V266.5M512.0 271.4V256.6M512.5 272.1V266.1M513.0 273.1V267.9M513.5 273.6V268.0M514.0 272.8V268.9M514.5 274.1V268.0M515.0 273.6V269.0M515.5 273.9V268.6M516.0 274.7V268.8M516.5 275.0V259.4M517.0 275.0V268.0M517.5 274.9V269.3M518.0 275.0V269.4M518.5 274.1V269.1M519.0 273.8V264.7M519.5 273.9V269.4M520.0 274.2V263.5M520.5 273.9V269.4M521.0 273.6V269.9M521.5 274.6V268.6M522.0 274.4V270.0M522.5 274.1V269.0M523.0 275.0V269.6M523.5 274.5V269.1M524.0 274.0V268.7M524.5 275.1V268.4M525.0 273.7V269.9M525.5 275.2V268.6M526.0 273.8V270.2M526.5 274.3V270.0M527.0 273.8V269.2M527.5 274.9V269.8M528.0 274.7V269.3M528.5 274.1V269.6M529.0 275.6V269.0M529.5 275.1V268.2M530.0 274.8V270.2M530.5 272.9V268.6M531.0 272.1V266.9M531.5 278.9V264.8M532.0 269.2V261.4M532.5 269.2V254.0M533.0 268.2V256.4M533.5 267.3V251.7M534.0 267.4V259.2M534.5 268.1V258.2M535.0 265.9V258.4M535.5 267.8V258.2M536.0 268.3V252.2M536.5 267.8V246.7M537.0 266.4V251.7M537.5 267.0V252.5M538.0 267.1V254.2M538.5 266.9V253.9M539.0 266.7V246.4M539.5 267.1V253.1M540.0 267.3V257.6M540.5 266.7V239.8M541.0 266.8V258.5M541.5 266.6V257.9M542.0 267.1V252.9M542.5 266.8V256.2M543.0 267.3V247.0M543.5 267.7V250.3M544.0 265.4V254.6M544.5 267.6V257.7M545.0 267.0V247.3M545.5 267.6V252.1M546.0 267.2V255.9M546.5 267.8V249.5M547.0 266.7V255.9M547.5 268.4V259.3M548.0 268.1V257.4M548.5 269.3V259.3M549.0 269.4V259.8M549.5 267.3V261.5M550.0 269.4V255.6M550.5 269.1V260.0M551.0 268.6V249.3M551.5 269.8V262.3M552.0 271.9V258.7M552.5 269.5V260.6M553.0 269.8V262.3M553.5 269.3V263.8M554.0 270.8V263.1M554.5 270.3V262.6M555.0 270.8V264.2M555.5 269.5V263.7M556.0 271.0V263.5M556.5 271.4V264.5M557.0 270.6V264.6M557.5 271.2V263.1M558.0 271.2V266.2M558.5 271.2V265.1M559.0 272.0V264.6M559.5 270.6V264.0M560.0 272.0V266.4M560.5 271.7V266.1M561.0 272.3V266.8M561.5 271.3V267.4M562.0 272.8V266.7M562.5 273.0V265.1M563.0 272.9V266.0M563.5 271.9V268.1M564.0 271.7V266.6M564.5 272.4V266.7M565.0 272.8V268.4M565.5 273.5V267.7M566.0 272.2V268.6M566.5 274.2V267.5M567.0 273.3V268.4M567.5 274.0V269.0M568.0 273.9V268.4M568.5 274.7V267.7M569.0 274.6V267.6M569.5 276.3V268.7M570.0 273.7V268.8M570.5 274.6V268.6M571.0 275.1V268.4M571.5 274.6V269.7M572.0 274.0V267.0M572.5 274.0V269.7M573.0 274.6V267.3M573.5 274.5V269.4M574.0 275.2V269.6M574.5 275.0V270.0M575.0 274.8V269.1M575.5 273.5V269.1M576.0 275.1V268.0M576.5 274.2V265.9M577.0 273.8V269.5M577.5 275.4V266.0M578.0 274.6V270.1M578.5 274.5V268.0M579.0 274.2V268.4M579.5 275.2V269.9M580.0 275.0V268.7M580.5 275.4V255.9M581.0 275.3V268.4M581.5 275.2V269.6M582.0 273.8V270.1M582.5 274.9V269.1M583.0 275.3V266.1M583.5 274.5V267.7M584.0 274.4V269.3M584.5 274.7V269.6M585.0 274.4V268.7M585.5 272.9V269.0M586.0 272.2V266.3M586.5 272.1V266.1M587.0 270.3V264.6M587.5 271.4V262.6M588.0 268.7V257.9M588.5 267.7V260.8M589.0 268.4V252.9M589.5 266.6V255.9M590.0 266.9V253.6M590.5 264.8V253.4M591.0 263.9V245.1M591.5 265.3V239.6M592.0 262.5V251.6M592.5 263.1V245.7M593.0 263.9V243.5M593.5 262.4V245.1M594.0 257.9V247.7M594.5 258.3V232.1M595.0 255.7V242.2M595.5 256.4V243.9M596.0 255.9V235.5M596.5 253.2V226.1M597.0 257.1V238.6M597.5 250.9V228.3M598.0 260.0V244.1M598.5 254.7V234.5M599.0 253.8V235.6M599.5 255.0V240.2M600.0 254.3V242.9M600.5 252.2V236.3M601.0 251.8V238.4M601.5 255.0V240.8M602.0 253.0V238.5M602.5 251.1V233.9M603.0 253.4V237.1M603.5 256.2V236.0M604.0 258.5V230.5M604.5 254.1V242.2M605.0 259.6V235.4M605.5 253.7V240.8M606.0 256.4V230.0M606.5 252.2V231.7M607.0 255.4V232.8M607.5 253.5V224.9M608.0 256.0V236.0M608.5 256.2V223.9M609.0 256.5V243.8M609.5 254.7V243.8M610.0 259.4V243.2M610.5 252.6V239.6M611.0 259.3V239.4M611.5 260.7V233.5M612.0 261.0V238.8M612.5 261.5V244.7M613.0 262.3V248.4M613.5 264.6V239.1M614.0 266.8V254.7M614.5 268.5V260.5M615.0 270.8V264.3M615.5 270.3V264.0M616.0 270.7V265.7M616.5 270.9V264.4M617.0 270.8V265.1M617.5 271.1V266.2M618.0 270.7V266.6M618.5 272.3V265.2M619.0 271.4V265.8M619.5 272.2V266.8M620.0 272.0V266.2M620.5 273.9V266.4M621.0 272.9V266.1M621.5 271.5V261.2M622.0 272.0V267.1M622.5 273.1V267.8M623.0 273.7V261.5M623.5 272.8V266.6M624.0 272.4V267.4M624.5 272.5V268.7M625.0 274.2V263.5M625.5 274.0V262.4M626.0 272.7V267.8M626.5 274.0V267.4M627.0 274.1V266.7M627.5 273.4V269.0M628.0 274.2V268.1M628.5 274.6V269.1M629.0 275.3V269.2M629.5 274.7V268.5M630.0 274.8V269.8M630.5 275.0V270.2M631.0 275.1V270.2M631.5 275.2V268.8M632.0 275.6V269.3M632.5 275.3V270.8M633.0 275.2V270.2M633.5 275.1V269.0M634.0 275.7V270.8M634.5 275.9V270.8M635.0 275.7V270.3M635.5 276.0V271.5M636.0 275.9V269.7M636.5 275.8V271.6M637.0 278.5V271.0M637.5 275.9V270.2M638.0 276.3V271.2M638.5 276.1V272.0M639.0 277.0V271.5M639.5 277.6V272.6M640.0 276.9V272.1M640.5 276.1V269.4M641.0 277.3V271.5M641.5 276.4V271.5M642.0 275.0V271.4M642.5 275.5V269.6M643.0 275.8V268.8M643.5 274.9V269.2M644.0 274.0V270.0M644.5 273.6V269.4M645.0 274.7V269.0M645.5 274.5V268.8M646.0 274.4V268.6M646.5 273.1V267.7M647.0 272.3V267.0M647.5 272.4V266.4M648.0 272.8V266.6M648.5 269.5V263.5M649.0 267.6V256.1M649.5 268.5V246.8M650.0 263.6V252.6M650.5 261.7V254.1M651.0 259.8V236.7M651.5 257.7V237.1M652.0 257.5V245.0M652.5 258.1V245.4M653.0 256.7V240.4M653.5 260.3V227.5M654.0 258.9V242.0M654.5 260.4V244.5M655.0 257.3V229.3M655.5 255.4V235.1M656.0 255.6V235.3M656.5 260.6V234.0M657.0 254.4V244.5M657.5 264.7V235.7M658.0 255.8V233.0M658.5 259.2V239.9M659.0 258.7V244.0M659.5 256.2V242.3M660.0 259.3V231.7M660.5 255.6V239.3M661.0 254.0V238.5M661.5 256.9V231.0M662.0 259.6V241.3M662.5 259.4V244.5M663.0 260.1V223.3M663.5 257.4V243.2M664.0 253.3V238.8M664.5 254.0V239.6M665.0 258.2V242.2" fill="none" stroke="#55839b" stroke-width="0.85"/>
  <path d="M212.5 255.1V171.2M217.5 256.6V187.9M209.5 257.7V212.1M207.5 259.6V234.4M203.5 263.7V236.3M227.5 274.5V247.5M244.5 276.4V260.5M259.5 263.0V216.8M264.5 259.6V224.2M268.5 258.0V207.4M261.5 261.0V234.4M283.5 271.2V251.2M290.5 272.1V250.3M305.5 273.1V256.8M313.5 265.5V233.5M322.5 259.6V238.2M327.5 259.0V240.0M338.5 268.3V210.2M368.5 263.0V214.0M383.5 251.5V167.4M387.5 252.9V186.0M378.5 252.1V202.8M372.5 257.7V227.0M380.5 251.9V217.7M375.5 254.9V223.3M402.5 268.7V252.1M412.5 269.8V248.4M419.5 269.7V248.4M435.5 269.4V242.8M441.5 269.6V249.3M491.5 268.8V251.2M495.5 267.8V248.4M498.5 267.0V249.3M509.5 267.0V253.1M513.5 270.1V254.9M545.5 262.8V242.8M549.5 264.7V247.5M593.5 255.8V209.3M595.5 250.0V191.6M603.5 247.9V207.9M608.5 249.1V213.0M612.5 251.2V211.2M599.5 248.7V221.4M590.5 262.4V234.4M625.5 270.7V253.1M642.5 273.3V249.3M650.5 261.0V216.8M654.5 250.7V171.2M659.5 248.0V216.8M663.5 249.7V206.5M657.5 249.2V228.9M199.5 268.2V250.3M237.5 277.1V263.3M287.5 271.7V254.9M347.5 274.3V263.3M397.5 267.9V258.6M425.5 269.6V256.8M430.5 269.5V254.9M486.5 270.0V254.9M540.5 263.0V250.3M207.5 259.1V240.5M208.5 258.2V236.1M210.5 256.8V249.3M210.5 256.3V236.6M218.5 256.8V236.3M219.5 260.0V245.6M221.5 266.5V256.1M257.5 266.1V256.1M260.5 261.4V247.6M311.5 270.7V263.1M313.5 267.0V263.6M319.5 261.7V248.2M328.5 258.9V249.0M330.5 259.1V240.0M332.5 261.0V251.4M342.5 272.6V266.5M369.5 261.6V242.8M382.5 251.6V220.0M387.5 253.1V233.0M399.5 268.2V259.6M442.5 269.9V266.5M486.5 270.0V265.0M491.5 268.7V262.7M519.5 271.8V265.7M522.5 271.9V268.6M546.5 263.5V258.0M548.5 264.2V259.0M569.5 271.5V268.3M586.5 270.2V262.3M589.5 264.3V258.9M590.5 261.3V250.7M596.5 249.2V230.7M604.5 247.7V219.2M605.5 247.5V229.8M608.5 249.3V212.1M609.5 249.9V215.6M612.5 254.0V230.1M617.5 268.5V266.2M646.5 270.7V264.1M653.5 251.5V228.6M655.5 250.4V218.2M658.5 248.6V238.2M661.5 248.2V224.0M663.5 249.7V212.1M664.5 250.8V242.5" fill="none" stroke="#5d8aa1" stroke-width="1"/>
  <g class="axl" text-anchor="end">
    <text x="190" y="157">1.5K</text><text x="190" y="180.3">1.25K</text><text x="190" y="203.6">1K</text><text x="190" y="226.9">750</text><text x="190" y="250.1">500</text><text x="190" y="273.4">250</text><text x="190" y="296.6">0</text>
  </g>
  <g class="axl" text-anchor="middle">
    <text x="229.7" y="308">Ноя 1</text><text x="286" y="308">Ноя 2</text><text x="342" y="308">Ноя 3</text><text x="398" y="308">Ноя 4</text><text x="454.4" y="308">Ноя 5</text><text x="510.4" y="308">Ноя 6</text><text x="566.3" y="308">Ноя 7</text><text x="623.6" y="308">Ноя 8</text>
  </g>
</svg>
<div class="a nw" style="left:198px;top:162px;font-size:8.8px;font-weight:700;color:#4a4a4a;line-height:10px">Просмотр в режиме реального времени</div>
<div class="a" style="left:381px;top:161px;width:34px;height:11.5px;border:1px solid #b5b5b5;border-radius:6px;background:#fff"></div>
<div class="a nw" style="left:389px;top:162.5px;font-size:8px;color:#444;line-height:9px">Выкл</div>
<div class="a" style="left:379.5px;top:159.3px;width:14px;height:14px;border-radius:7px;background:#fbfbfb;border:1px solid #c4c4c4;box-shadow:0 1px 1.5px rgba(0,0,0,.2)"></div>
<svg class="a" style="left:384px;top:163.8px" width="5" height="5" viewBox="0 0 5 5"><path d="M0.6,0.6 L4.4,4.4 M4.4,0.6 L0.6,4.4" stroke="#b0202a" stroke-width="1.5"/></svg>

<!-- progress -->
<div class="a nw" style="left:672px;top:153.7px;font-size:9.3px;color:#555;line-height:11px">Всего событий (сегодня)</div>
<div class="a nw" style="left:892px;top:153.7px;font-size:9.3px;color:#555;line-height:11px">372349</div>
<div class="a" style="left:672px;top:167px;width:251px;height:5px;background:#eeeeee"></div>
<div class="a" style="left:672px;top:167px;width:171px;height:5px;background:#5887a2"></div>
<div class="a nw" style="left:672px;top:183.7px;font-size:9.3px;color:#555;line-height:11px">Всего инцидентов (сегодня)</div>
<div class="a nw" style="left:912px;top:183.7px;font-size:9.3px;color:#555;line-height:11px">30</div>
<div class="a" style="left:672px;top:197px;width:251px;height:5px;background:#eeeeee"></div>
<div class="a" style="left:672px;top:197px;width:221px;height:5px;background:#9b1c27"></div>
<div class="a nw" style="left:672px;top:213.7px;font-size:9.3px;color:#555;line-height:11px">Обработанных инцидентов</div>
<div class="a nw" style="left:868px;top:213.7px;font-size:9.3px;color:#555;line-height:11px">3764 / 25950</div>
<div class="a" style="left:672px;top:227px;width:251px;height:5px;background:#eeeeee"></div>
<div class="a" style="left:672px;top:227px;width:35px;height:5px;background:#6d8040"></div>
<div class="a" style="left:672px;top:243px;width:23px;height:21px;border:1px solid #d2d2d2;border-radius:2px;background:#fff"></div>
<svg class="a" style="left:679px;top:250px" width="8" height="8" viewBox="0 0 8 8"><path d="M1.8,3 V1.2 C1.8,0.6 2.2,0.3 2.8,0.3 H5 L6.2,1.4 V3" fill="none" stroke="#333" stroke-width="0.9"/><rect x="0.2" y="3" width="7.6" height="2.4" rx="0.6" fill="#222"/><path d="M1.8,5.3 V7.2 H6.2 V5.3" fill="none" stroke="#333" stroke-width="0.9"/></svg>
<div class="a" style="left:698px;top:243px;width:22px;height:21px;border:1px solid #d2d2d2;border-radius:2px;background:#fff"></div>
<svg class="a" style="left:705px;top:250px" width="8" height="8" viewBox="0 0 8 8"><circle cx="4" cy="4" r="2.75" fill="#2a2a2a"/><path d="M4,0.2 V7.8 M0.2,4 H7.8 M1.3,1.3 L6.7,6.7 M6.7,1.3 L1.3,6.7" stroke="#2a2a2a" stroke-width="1.3"/><circle cx="4" cy="4" r="1.15" fill="#fff"/></svg>

<!-- incidents panel -->
<div class="a panel" style="left:162px;top:340px;width:768px;height:248.6px"></div>
<div class="a ph" style="left:163px;top:341px;width:766px;height:22px"></div>
<svg class="a" style="left:169px;top:345.5px" width="10" height="10" viewBox="0 0 10 10"><rect x="0" y="5" width="2.4" height="4.5" rx="0.5" fill="#333"/><rect x="3.4" y="0" width="2.4" height="9.5" rx="0.5" fill="#333"/><rect x="6.8" y="2.5" width="2.4" height="7" rx="0.5" fill="#333"/></svg>
<div class="a nw" style="left:184px;top:346px;font-size:10.5px;color:#555;line-height:12px">Онлайн мониторинг инцидентов</div>
<div class="a" style="left:842px;top:340px;width:88px;height:24px;background:#fff;border-top:2px solid #60879e;border-left:1px solid #d5d5d5"></div>
<svg class="a" style="left:768px;top:347px" width="9" height="10" viewBox="0 0 9 10"><rect x="0.3" y="1.3" width="8.4" height="8.4" fill="#bbb"/><path d="M0.3,3.5 H8.7 M0.3,5.6 H8.7 M0.3,7.6 H8.7 M2.5,3.5 V9.7 M4.5,3.5 V9.7 M6.5,3.5 V9.7" stroke="#f4f4f4" stroke-width="0.5"/></svg>
<div class="a nw" style="left:779px;top:347px;font-size:9.5px;color:#666;line-height:11px">Инциденты</div>
<svg class="a" style="left:853px;top:348px" width="9" height="9" viewBox="0 0 9 9"><rect x="0" y="0" width="8.5" height="8.5" fill="#333"/><rect x="1.5" y="2" width="5.5" height="1.2" fill="#888"/></svg>
<div class="a nw" style="left:865px;top:347px;font-size:9.6px;font-weight:700;color:#444;line-height:11px">Статистика</div>
<div class="a" style="left:170px;top:369.5px;width:23px;height:21.5px;border:1px solid #d2d2d2;border-radius:2px;background:#fff"></div>
<svg class="a" style="left:177.5px;top:376.5px" width="8" height="8" viewBox="0 0 8 8"><path d="M1.8,3 V1.2 C1.8,0.6 2.2,0.3 2.8,0.3 H5 L6.2,1.4 V3" fill="none" stroke="#333" stroke-width="0.9"/><rect x="0.2" y="3" width="7.6" height="2.4" rx="0.6" fill="#222"/><path d="M1.8,5.3 V7.2 H6.2 V5.3" fill="none" stroke="#333" stroke-width="0.9"/></svg>
<div class="a" style="left:163px;top:397px;width:766px;height:1px;background:#dcdcdc"></div>
<div class="a" style="left:867px;top:373px;width:55px;height:16px;border:1px solid #ccc;border-radius:2px;background:#fff"></div>
<svg class="a" style="left:870.5px;top:376.5px" width="8" height="8" viewBox="0 0 8 8"><circle cx="4" cy="4" r="2.75" fill="#2a2a2a"/><path d="M4,0.2 V7.8 M0.2,4 H7.8 M1.3,1.3 L6.7,6.7 M6.7,1.3 L1.3,6.7" stroke="#2a2a2a" stroke-width="1.3"/><circle cx="4" cy="4" r="1.15" fill="#fff"/></svg>
<div class="a nw" style="left:881px;top:376px;font-size:8.6px;color:#333;line-height:10px">Период</div>
<div class="a" style="left:914px;top:380px;width:0;height:0;border-left:2.5px solid transparent;border-right:2.5px solid transparent;border-top:3px solid #333"></div>

<!-- incidents chart -->
<svg class="a" style="left:0;top:0" width="940" height="598" viewBox="0 0 940 598">
  <defs><linearGradient id="rg" x1="0" y1="0" x2="0" y2="1"><stop offset="0" stop-color="#c0392b" stop-opacity="0.03"/><stop offset="1" stop-color="#c0392b" stop-opacity="0.25"/></linearGradient></defs>
  <g class="grid">
    <path d="M190,424.5 H916 M190,452.4 H916 M190,480.3 H916 M190,508.2 H916 M190,536.1 H916"/>
    <path d="M316,424 V564 M442.5,424 V564 M569,424 V564 M694.8,424 V564 M821.5,424 V564"/>
  </g>
  <path d="M190,564 L316,434.3 L442.5,512.4 L569,544.4 L695,564 L821.5,564 L916,564 V564 H190 Z" fill="url(#rg)"/>
  <path d="M190,564 L316,434.3 L442.5,512.4 L569,544.4 L695,563 L821.5,564" fill="none" stroke="#c9524a" stroke-width="1"/>
  <path d="M190,564.3 H821.5" stroke="#f5c642" stroke-width="1.2"/>
  <g fill="#fff" stroke="#f2c230" stroke-width="1.3"><circle cx="316" cy="564" r="2.3"/><circle cx="442.5" cy="564" r="2.3"/><circle cx="569" cy="564" r="2.3"/></g>
  <g fill="#fff" stroke="#b8262b" stroke-width="1.4"><circle cx="190" cy="564" r="2.5"/><circle cx="316" cy="434.3" r="2.5"/><circle cx="442.5" cy="512.4" r="2.5"/><circle cx="569" cy="544.4" r="2.5"/></g>
  <g class="axl" text-anchor="end" style="font-size:7.9px">
    <text x="184" y="426.5">100</text><text x="184" y="454.4">80</text><text x="184" y="482.3">60</text><text x="184" y="510.2">40</text><text x="184" y="538.1">20</text><text x="184" y="566.2">0</text>
  </g>
  <g class="axl" text-anchor="middle" style="font-size:7.7px">
    <text x="190" y="578">Ноя 3</text><text x="316" y="578">Ноя 4</text><text x="442.5" y="578">Ноя 5</text><text x="569" y="578">Ноя 6</text>
  </g>
  <circle cx="817" cy="408" r="1.8" fill="#fff" stroke="#f2c230" stroke-width="1.1"/>
  <circle cx="868" cy="408" r="1.8" fill="#fff" stroke="#c0302c" stroke-width="1.1"/>
  <text x="822.5" y="411" class="axl" style="font-size:8px;fill:#555">Средние</text>
  <text x="873.5" y="411" class="axl" style="font-size:8.2px;fill:#555">Критичные</text>
</svg>

<!-- notification -->
<div class="a" style="left:913px;top:452px;width:20px;height:22px;background:#b86b68"></div>
<svg class="a" style="left:919px;top:457px" width="8" height="12" viewBox="0 0 8 12"><path d="M3,0 L7,0 L4.5,4.5 L7.5,4.5 L1.5,12 L3,6.5 L0.5,6.5 Z" fill="#fff"/></svg>
<div class="a" style="left:645px;top:478px;width:288px;height:114.5px;background:#b86b68;border-left:2px solid #a85b58"></div>
<div class="a nw" style="left:655px;top:491.5px;font-size:11px;color:#fff;line-height:13px;transform:scaleX(0.915);transform-origin:0 0">Инцидент - srv-dbss - ALERT</div>
<svg class="a" style="left:916px;top:491.5px" width="9" height="8" viewBox="0 0 9 8"><path d="M1,0.8 L8,7.2 M8,0.8 L1,7.2" stroke="#e2c3c1" stroke-width="2.2"/></svg>
<div class="a nw" style="left:655px;top:516.5px;font-size:9.6px;font-weight:700;color:#fff;line-height:11px;transform:scaleX(0.91);transform-origin:0 0">Сообщение - &lt;33&gt;Nov 7 12:30:54 SecurityCapsuleSIEMC...</div>
<div class="a" style="left:821px;top:535.5px;width:104.5px;height:24.5px;border:2px solid #fff"></div>
<div class="a nw" style="left:830px;top:544.5px;font-size:8.2px;font-weight:700;color:#fff;line-height:10px">Просмотр инцидента</div>
<svg class="a" style="left:651px;top:566px" width="14" height="23" viewBox="0 0 14 23"><path d="M5,0 L13,0 L8.5,8.5 L13.5,8.5 L2,23 L5,12.5 L0.5,12.5 Z" fill="#fff"/></svg>
<div class="a nw" style="left:748px;top:568.5px;font-size:13.4px;color:#fff;line-height:16px;transform:scaleX(0.945);transform-origin:0 0">2023-11-07T12:30:54.39+03:00</div>
</body></html>
